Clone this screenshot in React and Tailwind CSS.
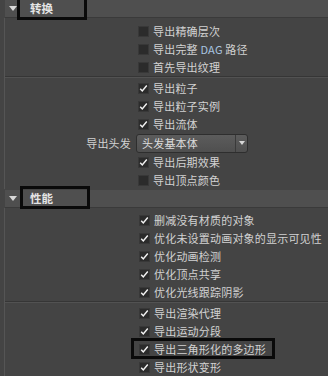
import React from "react";

const font = { fontFamily: '"Noto Sans CJK SC", "Noto Sans", sans-serif' };

function Check({ checked }) {
  return (
    <span className="w-[11px] h-[11px] bg-[#2b2b2b] border border-[#383838] flex items-center justify-center shrink-0">
      {checked && (
        <svg width="11" height="11" viewBox="0 0 11 11">
          <path d="M1.5 5.8 L4 8.5 L9.5 1.8" fill="none" stroke="#f2f2f2" strokeWidth="1.8" />
        </svg>
      )}
    </span>
  );
}

function Row({ label, checked, indent = "pl-[133px]" }) {
  return (
    <div className={`h-[18px] flex items-center gap-[4px] ${indent}`}>
      <Check checked={checked} />
      <span className="text-[11px] tracking-[0.2px] text-[#d2d2d2] leading-none whitespace-nowrap">{label}</span>
    </div>
  );
}

function Header({ title, boxClass }) {
  return (
    <div className="relative ml-[5px] h-[18px] bg-[#4f4f4f] border-b border-[#3a3a3a] flex items-center">
      <svg width="8" height="5" viewBox="0 0 8 5" className="ml-[4px]">
        <path d="M0 0 H8 L4 5 Z" fill="#d8d8d8" />
      </svg>
      <span className="ml-[13px] text-[11.5px] font-bold text-[#e4e4e4] leading-none">{title}</span>
      <div className={`absolute border-[3px] border-[#0a0a0a] ${boxClass}`} />
    </div>
  );
}

function Separator() {
  return (
    <div className="mb-[1px]">
      <div className="h-px bg-[#363636]" />
      <div className="h-px bg-[#525252]" />
    </div>
  );
}

export default function App() {
  return (
    <div className="w-[328px] h-[376px] bg-[#444444] overflow-hidden" style={font}>
      <Header title="转换" boxClass="left-[12px] top-[-3px] w-[70px] h-[23px]" />
      <div className="ml-[4px] border-l border-[#555] pt-[4px]">
        <Row label="导出精确层次" />
        <Row label={<>导出完整 <span className="text-[#a9c4e0]">DAG</span> 路径</>} />
        <Row label="首先导出纹理" />
        <Separator />
        <Row label="导出粒子" checked />
        <Row label="导出粒子实例" checked />
        <Row label="导出流体" checked />
        <div className="h-[20px] flex items-center">
          <span className="w-[126px] text-right text-[11px] tracking-[0.2px] text-[#d2d2d2] leading-none">导出头发</span>
          <div className="ml-[5px] w-[112px] h-[19px] rounded-[3px] border border-[#2e2e2e] bg-gradient-to-b from-[#5c5c5c] to-[#4f4f4f] flex items-center">
            <span className="flex-1 pl-[5px] text-[11px] tracking-[0.2px] text-[#dcdcdc] leading-none">头发基本体</span>
            <div className="w-[12px] h-full border-l border-[#3a3a3a] flex items-center justify-center">
              <svg width="6" height="4" viewBox="0 0 6 4">
                <path d="M0 0 H6 L3 4 Z" fill="#d8d8d8" />
              </svg>
            </div>
          </div>
        </div>
        <Row label="导出后期效果" checked />
        <Row label="导出顶点颜色" />
      </div>
      <div className="mt-[1px]">
        <Header title="性能" boxClass="left-[15px] top-[-4px] w-[70px] h-[23px]" />
      </div>
      <div className="ml-[4px] border-l border-[#555] pt-[3px]">
        <Row label="删减没有材质的对象" checked indent="pl-[134px]" />
        <Row label="优化未设置动画对象的显示可见性" checked indent="pl-[134px]" />
        <Row label="优化动画检测" checked indent="pl-[134px]" />
        <Row label="优化顶点共享" checked indent="pl-[134px]" />
        <Row label="优化光线跟踪阴影" checked indent="pl-[134px]" />
        <Separator />
        <Row label="导出渲染代理" checked indent="pl-[134px]" />
        <Row label="导出运动分段" checked indent="pl-[134px]" />
        <div className="relative">
          <Row label="导出三角形化的多边形" checked indent="pl-[134px]" />
          <div className="absolute left-[126px] top-[-2px] w-[144px] h-[21px] border-[3px] border-[#0a0a0a]" />
        </div>
        <Row label="导出形状变形" checked indent="pl-[134px]" />
      </div>
    </div>
  );
}
